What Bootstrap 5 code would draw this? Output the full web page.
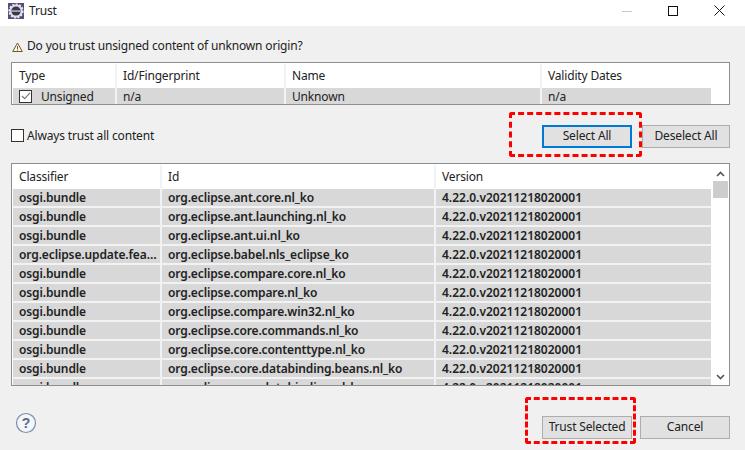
<!DOCTYPE html>
<html lang="en">
<head>
<meta charset="utf-8">
<title>Trust</title>
<link href="https://cdn.jsdelivr.net/npm/bootstrap@5.3.0/dist/css/bootstrap.min.css" rel="stylesheet">
<style>
html,body{height:450px;overflow:hidden;background:#f0f0f0;}
body{font-family:"Noto Sans","Open Sans",sans-serif;font-size:12px;color:#222;line-height:16px;letter-spacing:-.17px;}
.titlebar{height:26px;background:#fff;padding:0 3px 5px 8px;gap:5px;}
.winbtns{margin-left:auto;margin-top:5px;}
.winbtn{width:46px;height:26px;display:flex;align-items:center;justify-content:center;padding-bottom:5px;}
.content{position:relative;height:424px;padding:0 15px 0 11px;}
.question{height:36px;padding:12px 0 0 1px;gap:4px;}
.tbox{border:1px solid #8e8e8e;background:#fff;padding:1px 0 0 1px;overflow:hidden;position:relative;}
.tbox1{height:43px;}
.tbox2{height:223px;}
.tgrid{table-layout:fixed;border-collapse:separate;border-spacing:0;margin:0;width:698px;}
.tgrid th,.tgrid td{padding:0 0 0 6px;font-weight:400;white-space:nowrap;overflow:hidden;border-right:2px solid #f2f2f2;color:#222;box-shadow:none;background:#fff;}
.tgrid th{height:24px;vertical-align:middle;}
.tgrid td{background:#d8d8d8;border-bottom:2px solid #f2f2f2;height:19px;line-height:16px;vertical-align:middle;}
.tbox1 .tgrid td{height:16px;border-bottom:0;padding-top:2px;line-height:14px;}
.tgrid th:last-child,.tgrid td:last-child{border-right:0;}
.tbox2 td{font-weight:600;letter-spacing:-.12px;}
.tbox2 td:last-child{letter-spacing:0;}
.tbox2 .tgrid th{font-weight:400;}
.trunc{text-overflow:ellipsis;}
.cellcheck{width:13px;height:13px;flex:none;border:1px solid #333;background:#fff;display:flex;align-items:center;justify-content:center;margin-top:-2px;margin-right:1px;}
.alwayscheck{width:13px;height:13px;flex:none;border:1px solid #333;background:#fff;}
.midrow{height:58px;}
.alwaysrow{margin-top:3px;}
.alwaystext{margin-left:-1px;}
.ebtn{height:23px;width:90px;padding:0;font-size:12px;line-height:1;color:#222;background:#e1e1e1;border:1px solid #adadad;border-radius:0;font-family:inherit;letter-spacing:-.17px;}
.ebtn:hover{background:#e1e1e1;color:#222;border-color:#adadad;}
.ebtn-focus,.ebtn-focus:hover{border:2px solid #0078d7;}
.ebtn-tight{width:88px;}
.btnpair{gap:10px;}
.sbar{position:absolute;top:0;right:0;width:17px;height:100%;background:#fff;}
.sbar-thumb{position:absolute;left:1px;top:17px;width:15px;height:17px;background:#cdcdcd;}
.sbar-up{position:absolute;left:4px;top:7px;}
.sbar-down{position:absolute;left:4px;bottom:5px;}
.footrow{height:28px;margin-top:27px;}
.helpicon{margin-left:4px;margin-top:-8px;}
.redbox{position:absolute;border:3px dashed #f00;border-radius:3px;pointer-events:none;}
.redbox1{left:509px;top:86px;width:133px;height:45px;}
.redbox2{left:525px;top:371px;width:111px;height:47px;}
</style>
</head>
<body>
<div class="titlebar d-flex align-items-center">
  <svg width="16" height="16" viewBox="0 0 16 16"><rect width="16" height="16" fill="#5b4a82"/><circle cx="8" cy="8" r="6.6" fill="#d8d8d8" stroke="#e8e8e8" stroke-width="2" stroke-dasharray="2 1.4"/><circle cx="8" cy="8" r="4.6" fill="#3b3650"/><rect x="3.6" y="7.4" width="8.8" height="1.3" fill="#cfcbe0"/></svg>
  <span>Trust</span>
  <div class="winbtns d-flex">
    <div class="winbtn"><svg width="10" height="10" viewBox="0 0 10 10"><path d="M0 5.5H10" stroke="#c9c9c9"/></svg></div>
    <div class="winbtn"><svg width="10" height="10" viewBox="0 0 10 10"><rect x=".5" y=".5" width="9" height="9" fill="none" stroke="#111"/></svg></div>
    <div class="winbtn"><svg width="11" height="11" viewBox="0 0 11 11"><path d="M.5.5L10.5 10.5M10.5.5L.5 10.5" stroke="#111" stroke-width="1"/></svg></div>
  </div>
</div>
<div class="content">
  <div class="question d-flex align-items-start">
    <svg class="mt-1" width="11" height="10" viewBox="0 0 11 10"><path d="M5.5 1L10.3 9.5H.7Z" fill="#fff8e0" stroke="#6a5a30"/><path d="M5.5 4V7M5.5 7.6V8.6" stroke="#6a5a30"/></svg>
    <span>Do you trust unsigned content of unknown origin?</span>
  </div>
  <div class="tbox tbox1">
    <table class="tgrid">
      <colgroup><col style="width:104px"><col style="width:169px"><col style="width:256px"><col style="width:169px"></colgroup>
      <tr><th>Type</th><th>Id/Fingerprint</th><th>Name</th><th>Validity Dates</th></tr>
      <tr><td><div class="d-flex align-items-center gap-2"><span class="cellcheck"><svg width="10" height="8" viewBox="0 0 11 9"><path d="M1 4.5L4 7.5L10 1" fill="none" stroke="#777" stroke-width="1.3"/></svg></span>Unsigned</div></td><td>n/a</td><td>Unknown</td><td>n/a</td></tr>
    </table>
  </div>
  <div class="midrow d-flex align-items-center justify-content-between">
    <label class="alwaysrow d-flex align-items-center gap-1"><span class="alwayscheck"></span><span class="alwaystext">Always trust all content</span></label>
    <div class="btnpair d-flex mt-1">
      <button class="btn ebtn ebtn-focus">Select All</button>
      <button class="btn ebtn ebtn-tight">Deselect All</button>
    </div>
  </div>
  <div class="tbox tbox2">
    <table class="tgrid">
      <colgroup><col style="width:149px"><col style="width:274px"><col style="width:275px"></colgroup>
      <tr><th>Classifier</th><th>Id</th><th>Version</th></tr>
      <tr><td>osgi.bundle</td><td>org.eclipse.ant.core.nl_ko</td><td>4.22.0.v20211218020001</td></tr>
      <tr><td>osgi.bundle</td><td>org.eclipse.ant.launching.nl_ko</td><td>4.22.0.v20211218020001</td></tr>
      <tr><td>osgi.bundle</td><td>org.eclipse.ant.ui.nl_ko</td><td>4.22.0.v20211218020001</td></tr>
      <tr><td class="trunc">org.eclipse.update.feature</td><td>org.eclipse.babel.nls_eclipse_ko</td><td>4.22.0.v20211218020001</td></tr>
      <tr><td>osgi.bundle</td><td>org.eclipse.compare.core.nl_ko</td><td>4.22.0.v20211218020001</td></tr>
      <tr><td>osgi.bundle</td><td>org.eclipse.compare.nl_ko</td><td>4.22.0.v20211218020001</td></tr>
      <tr><td>osgi.bundle</td><td>org.eclipse.compare.win32.nl_ko</td><td>4.22.0.v20211218020001</td></tr>
      <tr><td>osgi.bundle</td><td>org.eclipse.core.commands.nl_ko</td><td>4.22.0.v20211218020001</td></tr>
      <tr><td>osgi.bundle</td><td>org.eclipse.core.contenttype.nl_ko</td><td>4.22.0.v20211218020001</td></tr>
      <tr><td>osgi.bundle</td><td>org.eclipse.core.databinding.beans.nl_ko</td><td>4.22.0.v20211218020001</td></tr>
      <tr><td>osgi.bundle</td><td>org.eclipse.core.databinding.nl_ko</td><td>4.22.0.v20211218020001</td></tr>
    </table>
    <div class="sbar">
      <svg class="sbar-up" width="9" height="6" viewBox="0 0 9 6"><path d="M1 5L4.5 1.5L8 5" fill="none" stroke="#555" stroke-width="1.6"/></svg>
      <div class="sbar-thumb"></div>
      <svg class="sbar-down" width="9" height="6" viewBox="0 0 9 6"><path d="M1 1L4.5 4.5L8 1" fill="none" stroke="#555" stroke-width="1.6"/></svg>
    </div>
  </div>
  <div class="footrow d-flex align-items-center justify-content-between">
    <svg class="helpicon" width="22" height="22" viewBox="0 0 22 22"><circle cx="11" cy="11" r="9.5" fill="#f4f6fa" stroke="#7f8ea8" stroke-width="1.2"/><text x="11" y="16" text-anchor="middle" font-family="Liberation Sans" font-weight="700" font-size="14" fill="#5a6a88">?</text></svg>
    <div class="d-flex gap-2">
      <button class="btn ebtn">Trust Selected</button>
      <button class="btn ebtn">Cancel</button>
    </div>
  </div>
  <div class="redbox redbox1"></div>
  <div class="redbox redbox2"></div>
</div>
<script src="https://cdn.jsdelivr.net/npm/bootstrap@5.3.0/dist/js/bootstrap.bundle.min.js"></script>
</body>
</html>
